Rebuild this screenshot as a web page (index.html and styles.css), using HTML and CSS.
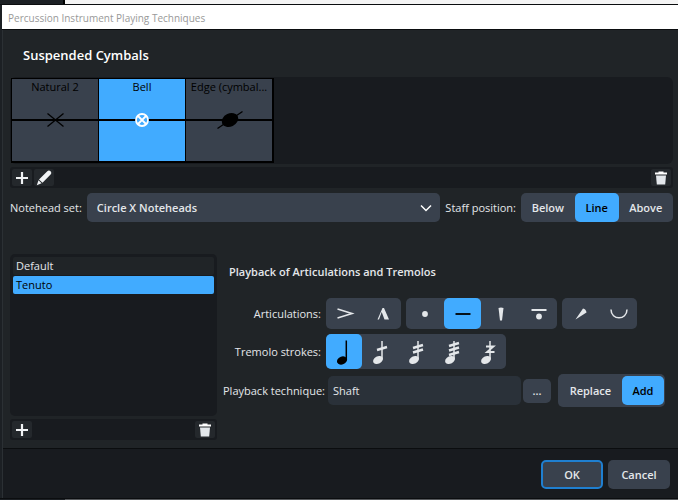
FILE: index.html
```html
<!DOCTYPE html>
<html lang="en">
<head>
  <meta charset="UTF-8">
  <meta name="viewport" content="width=device-width, initial-scale=1">
  <title>Percussion Instrument Playing Techniques</title>
  <link rel="stylesheet" href="styles.css">
</head>
<body>
  <div class="backdrop backdrop-top"></div>
  <div class="dialog" role="dialog" aria-labelledby="dialogTitle">
    <div class="titlebar" id="dialogTitle">Percussion Instrument Playing Techniques</div>

    <main class="content">
      <h1>Suspended Cymbals</h1>

      <div class="techniques">
        <button type="button" class="card">
          <span class="card-name">Natural 2</span>
          <svg class="staff" viewBox="0 0 86 22" preserveAspectRatio="none" aria-hidden="true">
            <path class="line" d="M0 11H86"/>
            <path d="M35.500 4.500L51.500 17.500M51.500 4.500L35.500 17.500" stroke="#000" stroke-width="1.300"/>
          </svg>
        </button>
        <button type="button" class="card selected">
          <span class="card-name">Bell</span>
          <svg class="staff" viewBox="0 0 86 22" preserveAspectRatio="none" aria-hidden="true">
            <path class="line" d="M0 11H86"/>
            <circle cx="43" cy="11" r="6" fill="#41abff" stroke="#fff" stroke-width="1.800"/>
            <path d="M39 7L47 15M47 7L39 15" stroke="#fff" stroke-width="1.800"/>
          </svg>
        </button>
        <button type="button" class="card">
          <span class="card-name">Edge (cymbal...</span>
          <svg class="staff" viewBox="0 0 86 22" preserveAspectRatio="none" aria-hidden="true">
            <path class="line" d="M0 11H86"/>
            <ellipse cx="44" cy="11" rx="8.600" ry="6.500" transform="rotate(-25 44 11)"/>
            <path d="M31.500 19.500L56.500 2.500" stroke="#000" stroke-width="1.400"/>
          </svg>
        </button>
      </div>

      <div class="toolbar">
        <button type="button" class="tool" aria-label="Add technique">
          <svg width="14" height="14" viewBox="0 0 14 14"><path d="M7 1V13M1 7H13" stroke="#f1f3f5" stroke-width="2.200"/></svg>
        </button>
        <button type="button" class="tool" aria-label="Edit technique">
          <svg width="16" height="16" viewBox="0 0 16 16" fill="#f1f3f5"><path d="M11.300 1.300Q12.900 -.1 14.500 1.300Q16 2.900 14.600 4.500L6.500 12.800L3 9.400ZM2.500 10.300L5.600 13.300L.8 15.200Z"/></svg>
        </button>
        <button type="button" class="tool tool-end" aria-label="Delete technique">
          <svg width="14" height="14" viewBox="0 0 14 14"><path d="M1 1.500H4.500V.5H9.500V1.500H13V3.500H1Z" fill="#fff"/><path d="M2 4.500H12L11.200 13.500H2.800Z" fill="#e3e7eb"/></svg>
        </button>
      </div>

      <div class="notehead-row">
        <label for="noteheadSet">Notehead set:</label>
        <select id="noteheadSet">
          <option>Circle X Noteheads</option>
        </select>
        <span id="staffLabel">Staff position:</span>
        <div class="segments staff-position" role="radiogroup" aria-labelledby="staffLabel">
          <label class="segment"><input type="radio" name="staff">Below</label>
          <label class="segment"><input type="radio" name="staff" checked>Line</label>
          <label class="segment"><input type="radio" name="staff">Above</label>
        </div>
      </div>

      <div class="columns">
        <section class="combinations">
          <ul class="list" role="listbox" aria-label="Articulation combinations">
            <li class="item" role="option">Default</li>
            <li class="item selected" role="option" aria-selected="true">Tenuto</li>
          </ul>
          <div class="toolbar">
            <button type="button" class="tool" aria-label="Add combination">
              <svg width="14" height="14" viewBox="0 0 14 14"><path d="M7 1V13M1 7H13" stroke="#f1f3f5" stroke-width="2.200"/></svg>
            </button>
            <button type="button" class="tool tool-end" aria-label="Delete combination">
              <svg width="14" height="14" viewBox="0 0 14 14"><path d="M1 1.500H4.500V.5H9.500V1.500H13V3.500H1Z" fill="#fff"/><path d="M2 4.500H12L11.200 13.500H2.800Z" fill="#e3e7eb"/></svg>
            </button>
          </div>
        </section>

        <section class="playback">
          <h2>Playback of Articulations and Tremolos</h2>

          <div class="field">
            <span class="field-label" id="artLabel">Articulations:</span>
            <div class="groups" role="group" aria-labelledby="artLabel">
              <div class="icon-group">
                <button type="button" class="icon" aria-label="Accent">
                  <svg viewBox="0 0 24 24"><path d="M4.500 7L19 11.500L4.500 16" fill="none" stroke="currentColor" stroke-width="1.600"/></svg>
                </button>
                <button type="button" class="icon" aria-label="Marcato">
                  <svg viewBox="0 0 24 24"><path d="M11.500 6H13L18 17.500H13.500L10.700 10L8 17.500H6.500Z" fill="currentColor"/></svg>
                </button>
              </div>
              <div class="icon-group">
                <button type="button" class="icon" aria-label="Staccato">
                  <svg viewBox="0 0 24 24"><circle cx="12" cy="12" r="2.900" fill="currentColor"/></svg>
                </button>
                <button type="button" class="icon selected" aria-label="Tenuto" aria-pressed="true">
                  <svg viewBox="0 0 24 24"><path d="M4.500 12H19.500" stroke="currentColor" stroke-width="1.800"/></svg>
                </button>
                <button type="button" class="icon" aria-label="Staccatissimo">
                  <svg viewBox="0 0 24 24"><path d="M9.500 6Q12 5 14.500 6L13 18.500H11Z" fill="currentColor"/></svg>
                </button>
                <button type="button" class="icon" aria-label="Staccato-tenuto">
                  <svg viewBox="0 0 24 24"><path d="M4.500 8H19.500" stroke="currentColor" stroke-width="2"/><circle cx="12" cy="14.500" r="2.900" fill="currentColor"/></svg>
                </button>
              </div>
              <div class="icon-group">
                <button type="button" class="icon" aria-label="Stress">
                  <svg viewBox="0 0 24 24"><path d="M6.500 17.500L14 6.500Q17 7 17.500 10.500Z" fill="currentColor"/></svg>
                </button>
                <button type="button" class="icon" aria-label="Unstress">
                  <svg viewBox="0 0 24 24"><path d="M4 7.500C4 18.500 20 18.500 20 7.500" fill="none" stroke="currentColor" stroke-width="1.500"/></svg>
                </button>
              </div>
            </div>
          </div>

          <div class="field">
            <span class="field-label" id="tremLabel">Tremolo strokes:</span>
            <div class="icon-group tremolos" role="group" aria-labelledby="tremLabel">
              <button type="button" class="icon selected" aria-label="No tremolo" aria-pressed="true">
                <svg viewBox="0 0 24 28"><ellipse cx="10" cy="22.500" rx="5.200" ry="3.900" transform="rotate(-24 10 22.500)" fill="currentColor"/><path d="M14.300 22V2.500" stroke="currentColor" stroke-width="1.500"/></svg>
              </button>
              <button type="button" class="icon" aria-label="One stroke">
                <svg viewBox="0 0 24 28"><ellipse cx="10" cy="22" rx="5.200" ry="3.700" transform="rotate(-28 10 22)" fill="currentColor"/><path d="M14 21.500V3" stroke="currentColor" stroke-width="1.500"/><path d="M9 12L19 9" stroke="currentColor" stroke-width="2.400"/></svg>
              </button>
              <button type="button" class="icon" aria-label="Two strokes">
                <svg viewBox="0 0 24 28"><ellipse cx="10" cy="22" rx="5.200" ry="3.700" transform="rotate(-28 10 22)" fill="currentColor"/><path d="M14 21.500V3" stroke="currentColor" stroke-width="1.500"/><path d="M9 10L19 7M9 14.500L19 11.500" stroke="currentColor" stroke-width="2.400"/></svg>
              </button>
              <button type="button" class="icon" aria-label="Three strokes">
                <svg viewBox="0 0 24 28"><ellipse cx="10" cy="22" rx="5.200" ry="3.700" transform="rotate(-28 10 22)" fill="currentColor"/><path d="M14 21.500V3" stroke="currentColor" stroke-width="1.500"/><path d="M9 8L19 5M9 12.500L19 9.500M9 17L19 14" stroke="currentColor" stroke-width="2.400"/></svg>
              </button>
              <button type="button" class="icon" aria-label="Z on stem">
                <svg viewBox="0 0 24 28"><ellipse cx="10" cy="22" rx="5.200" ry="3.700" transform="rotate(-28 10 22)" fill="currentColor"/><path d="M14 21.500V3" stroke="currentColor" stroke-width="1.500"/><path d="M10 8.500H17.500L11 14H18.500" fill="none" stroke="currentColor" stroke-width="1.800"/></svg>
              </button>
            </div>
          </div>

          <div class="field">
            <label class="field-label" for="technique">Playback technique:</label>
            <div class="technique-row">
              <input type="text" class="technique" id="technique" value="Shaft">
              <button type="button" class="browse" aria-label="Choose playback technique">...</button>
              <div class="segments mode" role="radiogroup" aria-label="Technique mode">
                <label class="segment"><input type="radio" name="mode">Replace</label>
                <label class="segment"><input type="radio" name="mode" checked>Add</label>
              </div>
            </div>
          </div>
        </section>
      </div>
    </main>

    <footer class="footer">
      <button type="button" class="btn btn-default">OK</button>
      <button type="button" class="btn">Cancel</button>
    </footer>
  </div>
  <div class="backdrop backdrop-bottom"></div>
</body>
</html>
```
FILE: styles.css
```css
* {
  box-sizing: border-box;
}
body {
  margin: 0;
  min-height: 100vh;
  display: flex;
  flex-direction: column;
  background: #1c2024;
  color: #e4e7ea;
  font-family: "Open Sans", "Noto Sans", sans-serif;
  font-size: 11px;
  line-height: 16px;
}
h1, h2, ul {
  margin: 0;
  padding: 0;
}
button, input, select {
  margin: 0;
  padding: 0;
  border: none;
  font: inherit;
  color: inherit;
}
.backdrop-top {
  height: 5px;
  border-bottom: 1px solid #0b0d0f;
  background: linear-gradient(to right, #1c2024 63px, #000 63px, #000 65px, #f4f4f4 65px);
}
.backdrop-bottom {
  height: 2px;
  border-top: 1px solid #0b0d0f;
  background: linear-gradient(to right, #1c2024 65px, #55585b 65px);
}

.dialog {
  flex: 1;
  display: flex;
  flex-direction: column;
  margin-left: 2px;
  border-left: 1px solid #2b3034;
  background: #202427;
}
.titlebar {
  height: 25px;
  margin-left: -1px;
  padding: 5px 6px;
  border-bottom: 1px solid #0b0d0f;
  background: #fff;
  color: #999;
  font-size: 10px;
}
.content {
  flex: 1;
  padding: 15px 5px 8px 7px;
}
h1 {
  padding-left: 13px;
  font-size: 13px;
  line-height: 20px;
  font-weight: 600;
  color: #fff;
}

/* playing technique cards */
.techniques {
  display: flex;
  margin-top: 12px;
  padding: 2px;
  height: 87px;
  border-radius: 6px;
  background: #181b1f;
}
.card {
  width: 87px;
  height: 83px;
  display: flex;
  flex-direction: column;
  border-right: 1px solid #000;
  border-bottom: 1px solid #000;
  background: #39414d;
  color: #000;
  box-shadow: 0 0 0 1px #000;
}
.card.selected {
  background: #41abff;
}
.card-name {
  width: 100%;
  text-align: center;
}
.staff {
  display: block;
  width: 100%;
  height: 22px;
  margin-top: 14px;
}
.line {
  stroke: #000;
  stroke-width: 2;
}

.toolbar {
  display: flex;
  gap: 2px;
  margin-top: 3px;
  padding: 2px;
  border-radius: 3px;
  background: #181b1f;
}
.tool {
  width: 20px;
  height: 17px;
  display: flex;
  align-items: center;
  justify-content: center;
  border-radius: 2px;
  background: #24282c;
}
.tool svg {
  flex: none;
}
.tool-end {
  margin-left: auto;
}

.notehead-row {
  display: flex;
  align-items: center;
  gap: 5px;
  margin-top: 5px;
}
select {
  flex: 1;
  min-width: 0;
  height: 29px;
  padding: 0 10px;
  appearance: none;
  border-radius: 5px;
  background: #39414d url("data:image/svg+xml,%3Csvg xmlns='http://www.w3.org/2000/svg' width='12' height='8'%3E%3Cpath d='M1 1.500L6 6.500L11 1.500' fill='none' stroke='%23fff' stroke-width='1.500'/%3E%3C/svg%3E") no-repeat right 8px center;
  font-weight: 600;
}
.segments {
  display: flex;
  border-radius: 5px;
  background: #39414d;
}
.segment {
  flex: 1 1 auto;
  height: 29px;
  display: flex;
  align-items: center;
  justify-content: center;
  padding: 0 10px;
  border-radius: 5px;
  font-weight: 600;
}
.segment input {
  appearance: none;
  width: 0;
  height: 0;
}
.segment:has(input:checked) {
  background: #41abff;
  color: #000;
}
.staff-position {
  width: 152px;
}

.columns {
  display: flex;
  gap: 6px;
  margin-top: 32px;
}
.combinations {
  width: 207px;
}
.list {
  height: 162px;
  padding: 3px;
  border-radius: 5px;
  background: #181b1f;
  list-style: none;
}
.item {
  height: 18px;
  margin-bottom: 1px;
  padding: 1px 3px;
  border-radius: 2px;
  background: #202427;
}
.item.selected {
  background: #41abff;
  color: #000;
}

.playback {
  flex: 1;
}
h2 {
  margin: 10px 0 18px;
  padding-left: 6px;
  font-size: 11px;
  line-height: 16px;
  font-weight: 600;
}
.field {
  display: grid;
  grid-template-columns: 98px 1fr;
  align-items: center;
  gap: 5px;
  margin-bottom: 5px;
}
.field-label {
  text-align: right;
  white-space: nowrap;
}
.groups {
  display: flex;
  gap: 5px;
}
.icon-group {
  display: flex;
  gap: 1px;
  width: fit-content;
  border-radius: 5px;
  background: #39414d;
}
.icon {
  width: 37px;
  height: 31px;
  display: flex;
  align-items: center;
  justify-content: center;
  border-radius: 5px;
  background: transparent;
}
.icon svg {
  width: 24px;
  height: 24px;
}
.icon.selected {
  background: #41abff;
  color: #000;
}
.tremolos {
  gap: 0;
}
.tremolos .icon {
  width: 36px;
  height: 35px;
}
.tremolos svg {
  height: 28px;
}
.technique-row {
  display: flex;
  align-items: center;
  gap: 2px;
  padding: 0 8px 0 2px;
}
.technique {
  flex: 1;
  min-width: 0;
  height: 29px;
  padding: 0 5px;
  border-radius: 5px;
  background: #2a3139;
}
.browse {
  width: 28px;
  height: 24px;
  border-radius: 5px;
  background: #39414d;
  font-weight: 600;
}
.mode {
  width: 107px;
  margin-left: 5px;
  padding: 2px 1px;
}

.footer {
  display: flex;
  justify-content: flex-end;
  gap: 5px;
  padding: 11px 8px 9px;
  border-top: 1px solid #0b0d0f;
  background: #181b1f;
}
.btn {
  width: 62px;
  height: 29px;
  border-radius: 5px;
  background: #39414d;
  font-weight: 600;
}
.btn-default {
  border: 2px solid #1f7fd0;
}
```
